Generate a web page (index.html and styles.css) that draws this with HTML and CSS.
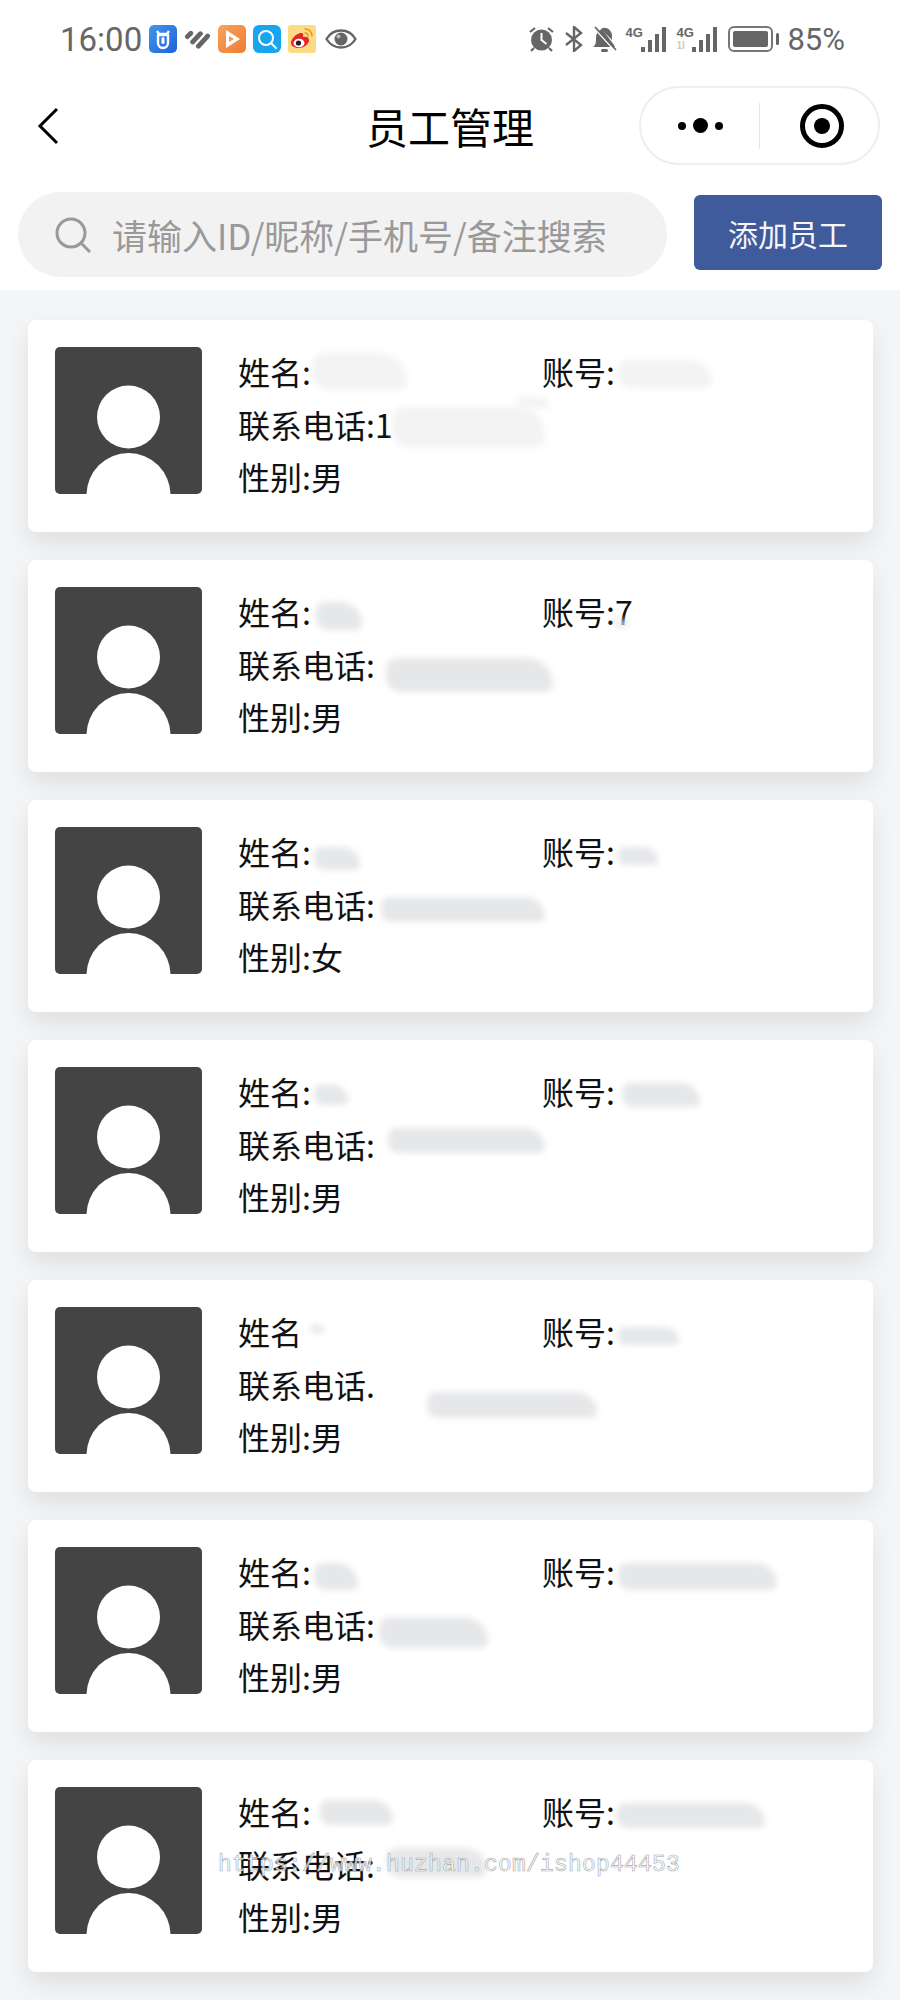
FILE: index.html
```html
<!DOCTYPE html>
<html lang="zh-CN">
<head>
    <meta charset="UTF-8">
    <meta name="viewport" content="width=device-width, initial-scale=1.0">
    <title>员工管理</title>
    <link rel="stylesheet" href="styles.css">
</head>
<body>
    <div class="page">
        <div class="status-bar">
            <div class="status-left">
                <span class="time">16:00</span>
                <svg class="app-icon" viewBox="0 0 28 28">
                    <defs><linearGradient id="blueApp" x1="0" y1="0" x2="1" y2="1"><stop offset="0" stop-color="#3f96ec"/><stop offset="1" stop-color="#1f63d8"/></linearGradient></defs>
                    <rect width="28" height="28" rx="5" fill="url(#blueApp)"/>
                    <path d="M8 6l2 3h8l2-3M9 10h10v8a5 5 0 0 1-10 0z" fill="none" stroke="#fff" stroke-width="2.4" stroke-linejoin="round"/>
                    <rect x="12.5" y="12" width="3" height="7" rx="1.5" fill="#fff"/>
                </svg>
                <svg class="heart-icon" viewBox="0 0 28 22">
                    <path d="M3.500 8.500L7 5M9 14L17 5.500M15 18.500L24.500 8" fill="none" stroke="#666" stroke-width="5" stroke-linecap="round"/>
                </svg>
                <svg class="app-icon" viewBox="0 0 28 28">
                    <defs><linearGradient id="orangeApp" x1="0" y1="0" x2="1" y2="1"><stop offset="0" stop-color="#f7a35c"/><stop offset="1" stop-color="#ee7d34"/></linearGradient></defs>
                    <rect width="28" height="28" rx="5" fill="url(#orangeApp)"/>
                    <path d="M8 5l14 9-14 9z" fill="#fff"/>
                    <path d="M11 11l5 3-5 3z" fill="#f39a55"/>
                </svg>
                <svg class="app-icon" viewBox="0 0 28 28">
                    <rect width="28" height="28" rx="6" fill="#16a5ee"/>
                    <circle cx="13" cy="13" r="7" fill="none" stroke="#fff" stroke-width="2"/>
                    <path d="M18 18l5 5" stroke="#fff" stroke-width="2" stroke-linecap="round"/>
                </svg>
                <svg class="app-icon" viewBox="0 0 28 28">
                    <rect width="28" height="28" rx="3" fill="#fbdc84"/>
                    <path d="M3 18c0-5 7-11 11-10 2 1 1 3 1 4 3-1 6 0 6 3 0 4-5 8-10 8-4 0-8-2-8-5z" fill="#e6242b"/>
                    <ellipse cx="11" cy="18" rx="5.5" ry="4.3" fill="#fff"/>
                    <circle cx="10.5" cy="18" r="2.6" fill="#222"/>
                    <path d="M17 4c4 0 7 3 7 7M17 8c2 0 3 1 3 3" fill="none" stroke="#f0932b" stroke-width="1.6" stroke-linecap="round"/>
                </svg>
                <svg class="eye-icon" viewBox="0 0 32 20">
                    <path d="M1.5 10C5 4 10 1.5 16 1.5S27 4 30.500 10C27 16 22 18.500 16 18.500S5 16 1.500 10z" fill="none" stroke="#666" stroke-width="2.400"/>
                    <circle cx="16" cy="10" r="6.500" fill="#666"/>
                    <circle cx="13.500" cy="7.500" r="2" fill="#bbb"/>
                </svg>
            </div>
            <div class="status-right">
                <svg class="alarm-icon" viewBox="0 0 27 26">
                    <circle cx="13.500" cy="14" r="10.500" fill="#666"/>
                    <path d="M13.500 7v7l5 4" fill="none" stroke="#fff" stroke-width="2"/>
                    <path d="M2 6l5-4M25 6l-5-4M6 22l-3 3M21 22l3 3" stroke="#666" stroke-width="2.200"/>
                </svg>
                <svg class="bt-icon" viewBox="0 0 20 26">
                    <path d="M2 7l15 12-7 6V1l7 6L2 19" fill="none" stroke="#666" stroke-width="2.400"/>
                </svg>
                <svg class="bell-icon" viewBox="0 0 25 26">
                    <path d="M1 21c3-2 3-5 3-9 0-5 3-8 6-9l12 16 1 2z" fill="#666"/>
                    <path d="M9 3c4-3 10 0 11 6v5z" fill="#666"/>
                    <rect x="9" y="23" width="7" height="3" rx="1.500" fill="#666"/>
                    <path d="M2 2l21 23" stroke="#fff" stroke-width="1.500"/>
                    <path d="M3 1l21 23" stroke="#666" stroke-width="1.800"/>
                </svg>
                <div class="signal">
                    <span class="net-label">4G</span>
                    <span class="bars"><i class="b1"></i><i class="b2"></i><i class="b3"></i><i class="b4"></i></span>
                </div>
                <div class="signal">
                    <span class="net-label">4G<em>1l</em></span>
                    <span class="bars"><i class="b1"></i><i class="b2"></i><i class="b3"></i><i class="b4"></i></span>
                </div>
                <div class="battery"><span class="battery-body"><span class="battery-level"></span></span><span class="battery-tip"></span></div>
                <span class="percent">85%</span>
            </div>
        </div>

        <div class="nav">
            <svg class="back" viewBox="0 0 22 38"><path d="M20 2L3 19l17 17" fill="none" stroke="#000" stroke-width="3"/></svg>
            <h1 class="title">员工管理</h1>
            <div class="capsule">
                <div class="capsule-dots"><span class="dot"></span><span class="dot big"></span><span class="dot"></span></div>
                <span class="capsule-line"></span>
                <div class="capsule-target"><span></span></div>
            </div>
        </div>

        <div class="search-row">
            <div class="search">
                <svg class="search-icon" viewBox="0 0 36 36"><circle cx="16" cy="16" r="14" fill="none" stroke="#999" stroke-width="3"/><path d="M26 26l9 9" stroke="#999" stroke-width="3"/></svg>
                <span class="placeholder">请输入ID/昵称/手机号/备注搜索</span>
            </div>
            <button class="add-btn">添加员工</button>
        </div>

        <div class="list">
            <div class="card">
                <svg class="avatar" viewBox="0 0 147 147"><circle cx="73.500" cy="70" r="31.500"/><circle cx="73.500" cy="148" r="42"/></svg>
                <div class="info">
                    <div class="row"><span class="field">姓名:</span><span class="field">账号:</span></div>
                    <div class="row"><span class="field">联系电话:1</span></div>
                    <div class="row"><span class="field">性别:男</span></div>
                </div>
                <span class="smudge faint s1a"></span><span class="smudge faint s1b"></span><span class="smudge faint s1c"></span><span class="smudge faint s1d"></span>
            </div>
            <div class="card">
                <svg class="avatar" viewBox="0 0 147 147"><circle cx="73.500" cy="70" r="31.500"/><circle cx="73.500" cy="148" r="42"/></svg>
                <div class="info">
                    <div class="row"><span class="field">姓名:</span><span class="field">账号:7</span></div>
                    <div class="row"><span class="field">联系电话:</span></div>
                    <div class="row"><span class="field">性别:男</span></div>
                </div>
                <span class="smudge s2a"></span><span class="smudge s2b"></span><span class="smudge s2c"></span>
            </div>
            <div class="card">
                <svg class="avatar" viewBox="0 0 147 147"><circle cx="73.500" cy="70" r="31.500"/><circle cx="73.500" cy="148" r="42"/></svg>
                <div class="info">
                    <div class="row"><span class="field">姓名:</span><span class="field">账号:</span></div>
                    <div class="row"><span class="field">联系电话:</span></div>
                    <div class="row"><span class="field">性别:女</span></div>
                </div>
                <span class="smudge s3a"></span><span class="smudge s3b"></span><span class="smudge s3c"></span>
            </div>
            <div class="card">
                <svg class="avatar" viewBox="0 0 147 147"><circle cx="73.500" cy="70" r="31.500"/><circle cx="73.500" cy="148" r="42"/></svg>
                <div class="info">
                    <div class="row"><span class="field">姓名:</span><span class="field">账号:</span></div>
                    <div class="row"><span class="field">联系电话:</span></div>
                    <div class="row"><span class="field">性别:男</span></div>
                </div>
                <span class="smudge s4a"></span><span class="smudge s4b"></span><span class="smudge s4c"></span>
            </div>
            <div class="card">
                <svg class="avatar" viewBox="0 0 147 147"><circle cx="73.500" cy="70" r="31.500"/><circle cx="73.500" cy="148" r="42"/></svg>
                <div class="info">
                    <div class="row"><span class="field">姓名</span><span class="field">账号:</span></div>
                    <div class="row"><span class="field">联系电话.</span></div>
                    <div class="row"><span class="field">性别:男</span></div>
                </div>
                <span class="smudge s5a"></span><span class="smudge s5b"></span><span class="smudge s5c"></span>
            </div>
            <div class="card">
                <svg class="avatar" viewBox="0 0 147 147"><circle cx="73.500" cy="70" r="31.500"/><circle cx="73.500" cy="148" r="42"/></svg>
                <div class="info">
                    <div class="row"><span class="field">姓名:</span><span class="field">账号:</span></div>
                    <div class="row"><span class="field">联系电话:</span></div>
                    <div class="row"><span class="field">性别:男</span></div>
                </div>
                <span class="smudge s6a"></span><span class="smudge s6b"></span><span class="smudge s6c"></span>
            </div>
            <div class="card">
                <svg class="avatar" viewBox="0 0 147 147"><circle cx="73.500" cy="70" r="31.500"/><circle cx="73.500" cy="148" r="42"/></svg>
                <div class="info">
                    <div class="row"><span class="field">姓名:</span><span class="field">账号:</span></div>
                    <div class="row"><span class="field">联系电话:</span></div>
                    <div class="row"><span class="field">性别:男</span></div>
                </div>
                <span class="smudge s7a"></span><span class="smudge s7b"></span><span class="smudge s7c"></span>
            </div>
        </div>

        <div class="watermark">https://www.huzhan.com/ishop44453</div>
    </div>
</body>
</html>
```

FILE: styles.css
```css
body {
    margin: 0;
    font-family: "Noto Sans CJK SC", "Noto Sans", sans-serif;
    background-color: #f4f5f7;
    color: #111;
}

.page {
    position: relative;
    width: 900px;
    height: 2000px;
    overflow: hidden;
}

/* status bar */
.status-bar {
    height: 78px;
    display: flex;
    justify-content: space-between;
    align-items: center;
    padding: 0 55px 0 60px;
    background: #fff;
}

.status-left,
.status-right {
    display: flex;
    align-items: center;
}

.time {
    font-family: Roboto, sans-serif;
    font-size: 33px;
    color: #666;
    width: 89px;
}

.app-icon {
    width: 28px;
    height: 28px;
    margin-right: 7px;
}

.heart-icon {
    width: 27px;
    height: 22px;
    margin-right: 7px;
}

.eye-icon {
    width: 32px;
    height: 20px;
    margin-left: 2px;
}

.alarm-icon {
    width: 27px;
    height: 26px;
    margin-right: 9px;
}

.bt-icon {
    width: 20px;
    height: 26px;
    margin-right: 8px;
}

.bell-icon {
    width: 25px;
    height: 26px;
    margin-right: 8px;
}

.signal {
    display: flex;
    align-items: flex-end;
    width: 43px;
    height: 26px;
    margin-right: 8px;
}

.net-label {
    font-family: "Liberation Sans", sans-serif;
    font-size: 13px;
    font-weight: bold;
    line-height: 14px;
    color: #666;
    width: 16px;
    align-self: flex-start;
}

.net-label em {
    display: block;
    font-style: normal;
    font-size: 10px;
    line-height: 12px;
    color: #ccc;
}

.bars {
    display: flex;
    align-items: flex-end;
    gap: 3px;
    height: 26px;
}

.bars i {
    display: block;
    width: 4px;
    background: #666;
}

.bars .b1 { height: 5px; }
.bars .b2 { height: 12px; }
.bars .b3 { height: 18px; }
.bars .b4 { height: 25px; }

.battery {
    display: flex;
    align-items: center;
    gap: 3px;
    margin: 0 8px 0 1px;
}

.battery-body {
    display: block;
    box-sizing: border-box;
    width: 45px;
    height: 26px;
    padding: 3px;
    border: 2px solid #777;
    border-radius: 6px;
}

.battery-level {
    display: block;
    width: 35px;
    height: 16px;
    background: #666;
    border-radius: 2px;
}

.battery-tip {
    display: block;
    width: 3px;
    height: 12px;
    background: #666;
    border-radius: 2px;
}

.percent {
    font-family: Roboto, sans-serif;
    font-size: 31px;
    color: #666;
}

/* nav */
.nav {
    height: 95px;
    display: grid;
    grid-template-columns: 1fr auto 1fr;
    align-items: center;
    padding: 0 20px;
    background: #fff;
}

.back {
    width: 22px;
    height: 38px;
    margin-left: 17px;
}

.title {
    margin: 0;
    font-size: 42px;
    font-weight: 400;
    color: #000;
}

.capsule {
    justify-self: end;
    box-sizing: border-box;
    width: 241px;
    height: 79px;
    display: flex;
    align-items: center;
    border: 2px solid #eee;
    border-radius: 40px;
}

.capsule-dots {
    display: flex;
    align-items: center;
    justify-content: center;
    gap: 7px;
    width: 118px;
}

.dot {
    width: 8px;
    height: 8px;
    border-radius: 50%;
    background: #000;
}

.dot.big {
    width: 15px;
    height: 15px;
}

.capsule-line {
    width: 1px;
    height: 46px;
    background: #e5e5e5;
}

.capsule-target {
    box-sizing: border-box;
    width: 44px;
    height: 44px;
    margin-left: 40px;
    border: 5px solid #000;
    border-radius: 50%;
    display: flex;
    align-items: center;
    justify-content: center;
}

.capsule-target span {
    width: 16px;
    height: 16px;
    background: #000;
    border-radius: 50%;
}

/* search */
.search-row {
    height: 117px;
    box-sizing: border-box;
    padding: 19px 18px 13px;
    display: flex;
    justify-content: space-between;
    align-items: center;
    background: #fff;
}

.search {
    box-sizing: border-box;
    width: 649px;
    height: 85px;
    padding-left: 37px;
    display: flex;
    align-items: center;
    background: #f2f2f3;
    border-radius: 43px;
}

.search-icon {
    width: 36px;
    height: 36px;
    margin-right: 21px;
}

.placeholder {
    font-size: 35px;
    color: #999;
}

.add-btn {
    width: 188px;
    height: 75px;
    margin-bottom: 4px;
    border: none;
    border-radius: 6px;
    background: #3f5b9c;
    color: #f4f6fa;
    font-family: inherit;
    font-size: 30px;
    padding: 0;
}

/* list */
.list {
    display: flex;
    flex-direction: column;
    gap: 28px;
    padding: 30px 27px 28px 28px;
}

.card {
    position: relative;
    box-sizing: border-box;
    height: 212px;
    padding: 27px;
    display: flex;
    gap: 36px;
    background: #fff;
    border-radius: 8px;
    box-shadow: 0 12px 24px rgba(0,0,0,0.09);
}

.avatar {
    flex: none;
    width: 147px;
    height: 147px;
    background: #444;
    border-radius: 5px;
    fill: #fff;
}

.info {
    margin-top: -2px;
    font-size: 32px;
    line-height: 52.5px;
    color: #111;
}

.row {
    display: flex;
    height: 52.5px;
}

.field {
    width: 304px;
    white-space: nowrap;
}

/* blurred-out private values lying over the text */
.smudge {
    position: absolute;
    background: #e6e7e9;
    border-radius: 12px 28px 8px 16px;
    filter: blur(3px);
}

.smudge.faint { background: #f3f3f4; }

.s1a { left: 284px; top: 33px; width: 95px; height: 37px; }
.s1b { left: 590px; top: 40px; width: 94px; height: 28px; }
.s1c { left: 364px; top: 87px; width: 153px; height: 40px; }
.s1d { left: 490px; top: 77px; width: 31px; height: 11px; }
.s2a { left: 288px; top: 42px; width: 46px; height: 28px; }
.s2b { left: 586px; top: 60px; width: 15px; height: 7px; }
.s2c { left: 358px; top: 98px; width: 167px; height: 34px; }
.s3a { left: 286px; top: 47px; width: 46px; height: 23px; }
.s3b { left: 590px; top: 47px; width: 40px; height: 18px; }
.s3c { left: 353px; top: 97px; width: 164px; height: 25px; }
.s4a { left: 286px; top: 45px; width: 34px; height: 20px; }
.s4b { left: 594px; top: 43px; width: 78px; height: 24px; }
.s4c { left: 360px; top: 88px; width: 157px; height: 25px; }
.s5a { left: 282px; top: 45px; width: 15px; height: 8px; }
.s5b { left: 590px; top: 47px; width: 61px; height: 18px; }
.s5c { left: 399px; top: 112px; width: 170px; height: 26px; }
.s6a { left: 286px; top: 43px; width: 44px; height: 27px; }
.s6b { left: 590px; top: 43px; width: 159px; height: 27px; }
.s6c { left: 351px; top: 97px; width: 109px; height: 31px; }
.s7a { left: 292px; top: 40px; width: 73px; height: 25px; }
.s7b { left: 589px; top: 43px; width: 148px; height: 25px; }
.s7c { left: 359px; top: 88px; width: 100px; height: 29px; }

.watermark {
    position: absolute;
    left: 218px;
    top: 1850px;
    font-family: "Liberation Mono", monospace;
    font-size: 23px;
    line-height: 30px;
    letter-spacing: 0.2px;
    color: rgba(255,255,255,0.75);
    -webkit-text-stroke: 0.6px #a8a8a8;
    white-space: nowrap;
}
```
